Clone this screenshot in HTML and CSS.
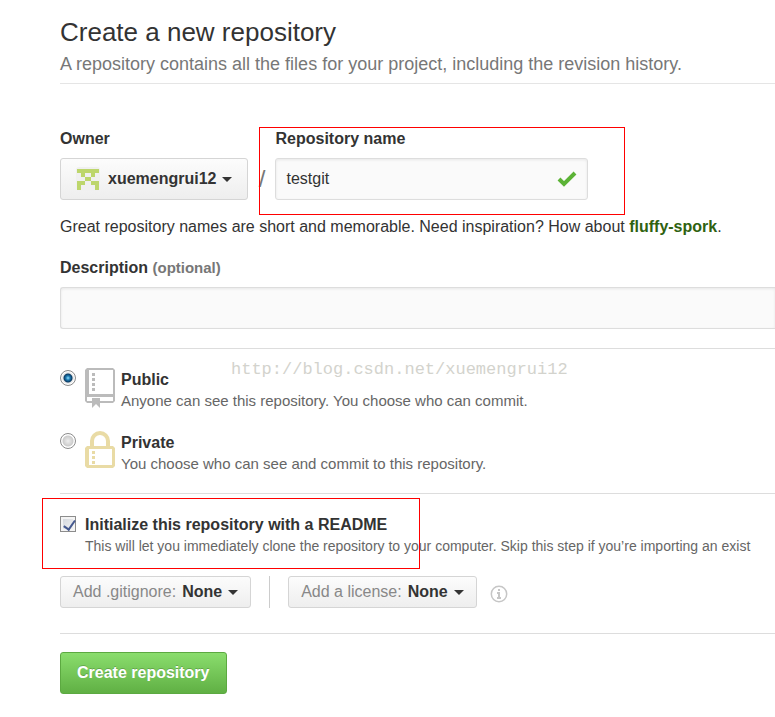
FILE: index.html
```html
<!DOCTYPE html>
<html lang="en">
<head>
<meta charset="utf-8">
<title>Create a new repository</title>
<link rel="stylesheet" href="styles.css">
</head>
<body>
<main class="page">
  <header class="heading">
    <h1>Create a new repository</h1>
    <p>A repository contains all the files for your project, including the revision history.</p>
  </header>
  <form>
    <section class="section names">
      <div class="name-row">
        <div class="field">
          <label for="owner">Owner</label>
          <button type="button" id="owner" class="btn owner">
            <svg class="avatar" width="24" height="24" viewBox="0 0 24 24" aria-hidden="true">
              <rect width="24" height="24" rx="3" fill="#f0f0f0"/>
              <path fill="#bdd66c" d="M1 2h22v4H1zM5 6h4v4H5zM15 6h4v4h-4zM9 10h6v4H9zM1 14h8v4H1zM15 14h8v4h-8zM1 18h4v5H1zM19 18h4v5h-4z"/>
            </svg>
            <span class="value">xuemengrui12</span><i class="caret"></i>
          </button>
        </div>
        <span class="slash">/</span>
        <div class="field">
          <label for="name">Repository name</label>
          <div class="name-box">
            <input type="text" id="name" class="input" value="testgit">
            <svg class="check" width="20" height="16" viewBox="0 0 20 16" aria-hidden="true"><path d="M2 8l5 5L18 2" fill="none" stroke="#5cb336" stroke-width="4"/></svg>
          </div>
        </div>
      </div>
      <p class="hint">Great repository names are short and memorable. Need inspiration? How about <strong>fluffy-spork</strong>.</p>
      <div class="field">
        <label for="description">Description <small>(optional)</small></label>
        <input type="text" id="description" class="input description">
      </div>
      <div class="mark name-mark"></div>
    </section>
    <section class="section visibility">
      <div class="choice">
        <input type="radio" name="visibility" id="public" checked>
        <svg width="30" height="40" viewBox="0 0 30 40" aria-hidden="true">
          <path fill="#bbb" fill-rule="evenodd" d="M2 0h26l2 2v31l-2 2H15v5l-4-4-4 4v-5H2l-2-2V2zM4 2v24h24V2zM2 29v4h5v-3h8v3h13v-4z"/>
          <path fill="#bbb" d="M7 5h3v3H7zM7 10h3v3H7zM7 15h3v3H7zM7 20h3v3H7z"/>
        </svg>
        <label for="public"><b>Public</b><span>Anyone can see this repository. You choose who can commit.</span></label>
      </div>
      <div class="choice">
        <input type="radio" name="visibility" id="private">
        <svg width="30" height="40" viewBox="0 0 30 40" aria-hidden="true">
          <path fill="#e9dba5" fill-rule="evenodd" d="M5 15v-5a10 10 0 0 1 20 0v5h3l2 2v18l-2 2H2l-2-2V17l2-2zM9 15h12v-5a6 6 0 0 0-12 0zM4 18v16h23V18z"/>
          <path fill="#e9dba5" d="M7 20h3v3H7zM7 25h3v3H7zM7 30h3v3H7z"/>
        </svg>
        <label for="private"><b>Private</b><span>You choose who can see and commit to this repository.</span></label>
      </div>
      <div class="watermark">http://blog.csdn.net/xuemengrui12</div>
    </section>
    <section class="section setup">
      <div class="choice">
        <input type="checkbox" id="readme" checked>
        <label for="readme"><b>Initialize this repository with a README</b><span>This will let you immediately clone the repository to your computer. Skip this step if you’re importing an exist</span></label>
      </div>
      <div class="extras">
        <button type="button" class="btn"><span>Add .gitignore:</span><span class="value">None</span><i class="caret"></i></button>
        <span class="divider"></span>
        <button type="button" class="btn"><span>Add a license:</span><span class="value">None</span><i class="caret"></i></button>
        <svg class="info" width="18" height="18" viewBox="0 0 18 18" aria-hidden="true">
          <circle cx="9" cy="9" r="7.7" fill="none" stroke="#c6c6c6" stroke-width="1.5"/>
          <path fill="#c6c6c6" d="M8 4h2v2H8zM7 7h3v5h1v2H7v-2h1V9H7z"/>
        </svg>
      </div>
      <div class="mark readme-mark"></div>
    </section>
    <button type="submit" class="btn submit">Create repository</button>
  </form>
</main>
</body>
</html>
```
FILE: styles.css
```css
* { box-sizing: border-box; }
body {
  margin: 0;
  background: #fff;
  color: #333;
  font: 16px/24px "Liberation Sans", Arial, sans-serif;
}
h1, p { margin: 0; }
.page { padding: 16px 0 23px 60px; overflow: hidden; }
.heading { padding-bottom: 7px; border-bottom: 1px solid #e5e5e5; }
h1 { font-size: 26px; line-height: 32px; font-weight: normal; }
.heading p { margin-top: 4px; font-size: 18px; color: #777; white-space: nowrap; }

.section { position: relative; border-bottom: 1px solid #ddd; }
.names { padding: 43px 0 19px; }
.name-row { display: flex; align-items: flex-end; }
.field { display: flex; flex-direction: column; align-items: flex-start; gap: 7px; }
label { font-weight: bold; }
label small { font-size: 15px; color: #777; }

.btn {
  display: flex;
  align-items: center;
  gap: 6px;
  height: 32px;
  padding: 0 12px;
  border: 1px solid #d5d5d5;
  border-radius: 3px;
  background: linear-gradient(#fcfcfc, #eee);
  color: #888;
  font: inherit;
  white-space: nowrap;
}
.value { color: #333; font-weight: bold; }
.caret {
  border: 5px solid transparent;
  border-top-color: #333;
  border-bottom: 0;
}
.owner { height: 42px; padding: 0 15px; }
.avatar { margin-right: 2px; }
.slash { width: 27px; text-align: center; font-size: 24px; line-height: 42px; color: #777; }
.name-box { position: relative; }
.input {
  display: block;
  width: 313px;
  height: 42px;
  padding: 0 10px;
  border: 1px solid #ddd;
  border-radius: 3px;
  background: #fafafa;
  box-shadow: inset 0 1px 3px rgba(0, 0, 0, 0.08);
  color: #333;
  font: inherit;
  outline: none;
}
.check { position: absolute; right: 11px; top: 13px; }
.hint { margin: 15px 0 17px; white-space: nowrap; }
.hint strong { color: #2f6210; }
.description { width: 100%; border-right: 0; border-radius: 3px 0 0 3px; }

.visibility { display: grid; gap: 21px; padding: 19px 0 20px; }
.choice { display: flex; align-items: flex-start; }
.choice input {
  appearance: none;
  flex: none;
  width: 16px;
  height: 16px;
  margin: 3px 9px 0 0;
}
.choice svg { flex: none; margin-right: 6px; }
.choice label { display: grid; white-space: nowrap; }
.choice label span { font-size: 15px; line-height: 18px; font-weight: normal; color: #666; }
.setup .choice label span { font-size: 14px; }
.choice input[type="radio"] {
  margin-top: 2px;
  border: 1px solid #8c8c8c;
  border-radius: 50%;
  background: radial-gradient(circle at 7px 7px, #eee, #ccc 5px, #fff 6px);
}
.choice input[type="radio"]:checked {
  background: radial-gradient(circle at 7px 7px, #8fe0ff 0, #1f7db5 2px, #0b3b63 4px, #e8e8e8 5px);
  box-shadow: inset 0 0 0 1px #fff;
}
input[type="checkbox"] {
  border: 1px solid #8c8c8c;
  background: linear-gradient(135deg, #d0d4da, #f6f6f6);
  box-shadow: inset 0 0 0 2px #f4f4f4;
}
input[type="checkbox"]:checked::after {
  content: "";
  display: block;
  width: 5px;
  height: 10px;
  margin: 1px 0 0 5px;
  border: solid #45598f;
  border-width: 0 2px 2px 0;
  transform: rotate(35deg);
}
.watermark {
  position: absolute;
  left: 171px;
  top: 9px;
  color: #d3d3cd;
  font: 17px/24px "Liberation Mono", "Courier New", monospace;
}

.setup { padding: 19px 0 25px; }
.extras { display: flex; align-items: center; margin-top: 21px; }
.divider { width: 1px; height: 32px; margin: 0 18px; background: #ccc; }
.info { margin: 4px 0 0 13px; }
.mark { position: absolute; border: 1px solid #f00; pointer-events: none; }
.name-mark { left: 199px; top: 43px; width: 366px; height: 88px; }
.readme-mark { left: -18px; top: 4px; width: 378px; height: 71px; }

.submit {
  height: 42px;
  margin-top: 18px;
  padding: 0 16px;
  border-color: #5ca941;
  background: linear-gradient(#8add6d, #60b044);
  color: #fff;
  font-weight: bold;
  text-shadow: 0 -1px 0 rgba(0, 0, 0, 0.2);
}
```
